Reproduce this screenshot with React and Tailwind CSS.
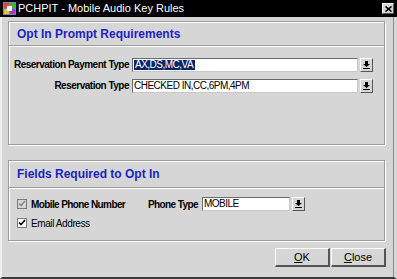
import React from 'react';

const font = { fontFamily: '"Liberation Sans", Arial, sans-serif' };

// small combo arrow button
const DropButton = () => (
  <div className="w-[13px] h-[14px] bg-[#d6d6d6] border-t border-l border-white border-b border-r border-b-[#555] border-r-[#555] flex items-center justify-center shrink-0">
    <svg width="7" height="8" viewBox="0 0 7 8">
      <path d="M2 0h3v3h2L3.5 6 0 3h2z" fill="#000" />
      <rect x="0" y="7" width="7" height="1" fill="#000" />
    </svg>
  </div>
);

const Combo = ({ value, width, selected }) => (
  <div className="flex items-center gap-[2px]">
    <div
      className="h-[14px] bg-white border border-[#6b6b6b] border-r-[#c8c8c8] border-b-[#c8c8c8] flex items-center pl-[1px] text-[10px] tracking-[-0.5px] leading-none text-black whitespace-nowrap overflow-hidden"
      style={{ width }}
    >
      {selected ? <span className="bg-[#0a2468] text-white pl-[1px] pr-[2px]">{value}</span> : <span>{value}</span>}
    </div>
    <DropButton />
  </div>
);

const Panel = ({ title, headerH, height, children }) => (
  <div
    className="w-[377px] border border-[#9c9c9c] shadow-[inset_1px_1px_0_#fff,1px_1px_0_#fff] flex flex-col"
    style={{ height }}
  >
    <div
      className="flex items-center pl-[8px] border-b border-[#9c9c9c] shadow-[0_1px_0_#fff] text-[#1f1fc4] font-bold text-[12px] whitespace-nowrap"
      style={{ height: headerH }}
    >
      {title}
    </div>
    {children}
  </div>
);

const Check = ({ disabled }) => (
  <div className={`w-[10px] h-[10px] border border-[#7a7a7a] shrink-0 ${disabled ? 'bg-[#d6d6d6]' : 'bg-white'} flex items-center justify-center`}>
    <svg width="8" height="8" viewBox="0 0 8 8">
      <path d="M1 3.5l2 2 4-4.5" stroke={disabled ? '#8a8a8a' : '#000'} strokeWidth="1.6" fill="none" />
    </svg>
  </div>
);

const WinButton = ({ children }) => (
  <div className="w-[55px] h-[19px] bg-[#d6d6d6] border-t border-l border-white border-b-2 border-r-2 border-b-[#555] border-r-[#555] flex items-center justify-center text-[11px] text-black">
    {children}
  </div>
);

export default function App() {
  return (
    <div className="w-[397px] h-[279px] bg-[#d6d6d6] flex flex-col overflow-hidden" style={font}>
      {/* title bar */}
      <div className="h-[17px] bg-black flex items-center pl-[3px] pr-[3px] shrink-0">
        <svg width="13" height="13" viewBox="0 0 13 13" className="shrink-0">
          <rect x="0" y="0" width="13" height="13" fill="#6a8ab8" />
          <rect x="1" y="1" width="5" height="5" fill="#e04040" />
          <rect x="7" y="1" width="5" height="5" fill="#40b040" />
          <rect x="1" y="7" width="5" height="5" fill="#e0c040" />
          <rect x="7" y="7" width="5" height="5" fill="#a040c0" />
          <rect x="4" y="4" width="5" height="5" fill="#fff" />
        </svg>
        <span className="text-white text-[11px] ml-[2px] leading-none whitespace-nowrap">PCHPIT - Mobile Audio Key Rules</span>
        <div className="ml-auto w-[12px] h-[11px] bg-[#d6d6d6] border-t border-l border-white border-b border-r border-b-[#555] border-r-[#555] flex items-center justify-center">
          <svg width="7" height="6" viewBox="0 0 7 6">
            <path d="M0.5 0.5l6 5M6.5 0.5l-6 5" stroke="#000" strokeWidth="1.6" />
          </svg>
        </div>
      </div>

      {/* body */}
      <div className="flex-1 flex border-l-2 border-l-[#efefef] border-r-[3px] border-r-[#d6d6d6] border-b-2 border-b-[#3a3a3a]">
        <div className="flex-1 flex flex-col pl-[6px] pt-[4px] border-r border-[#8a8a8a]">
          <Panel title="Opt In Prompt Requirements" headerH={24} height={124}>
            <div className="flex flex-col gap-[6px] pt-[11px] text-[10px] text-black">
              <div className="flex items-center">
                <div className="w-[123px] text-right pr-[3px] font-bold whitespace-nowrap tracking-[-0.5px]">Reservation Payment Type</div>
                <Combo value="AX,DS,MC,VA" width={226} selected />
              </div>
              <div className="flex items-center">
                <div className="w-[123px] text-right pr-[3px] font-bold whitespace-nowrap tracking-[-0.5px]">Reservation Type</div>
                <Combo value="CHECKED IN,CC,6PM,4PM" width={226} />
              </div>
            </div>
          </Panel>

          <div className="h-[15px]" />

          <Panel title="Fields Required to Opt In" headerH={27} height={81}>
            <div className="flex flex-col pl-[8px] pt-[9px] gap-[5px] text-[10px] text-black">
              <div className="flex items-center h-[14px]">
                <Check disabled />
                <span className="ml-[4px] w-[117px] font-bold whitespace-nowrap tracking-[-0.6px]">Mobile Phone Number</span>
                <span className="w-[54px] font-bold whitespace-nowrap tracking-[-0.6px]">Phone Type</span>
                <Combo value="MOBILE" width={88} />
              </div>
              <div className="flex items-center h-[14px]">
                <Check />
                <span className="ml-[4px] whitespace-nowrap tracking-[-0.4px]">Email Address</span>
              </div>
            </div>
          </Panel>

          <div className="flex justify-end gap-[1px] pr-[7px] pt-[7px]">
            <WinButton><span><u>O</u>K</span></WinButton>
            <WinButton><span><u>C</u>lose</span></WinButton>
          </div>
        </div>
      </div>
    </div>
  );
}
